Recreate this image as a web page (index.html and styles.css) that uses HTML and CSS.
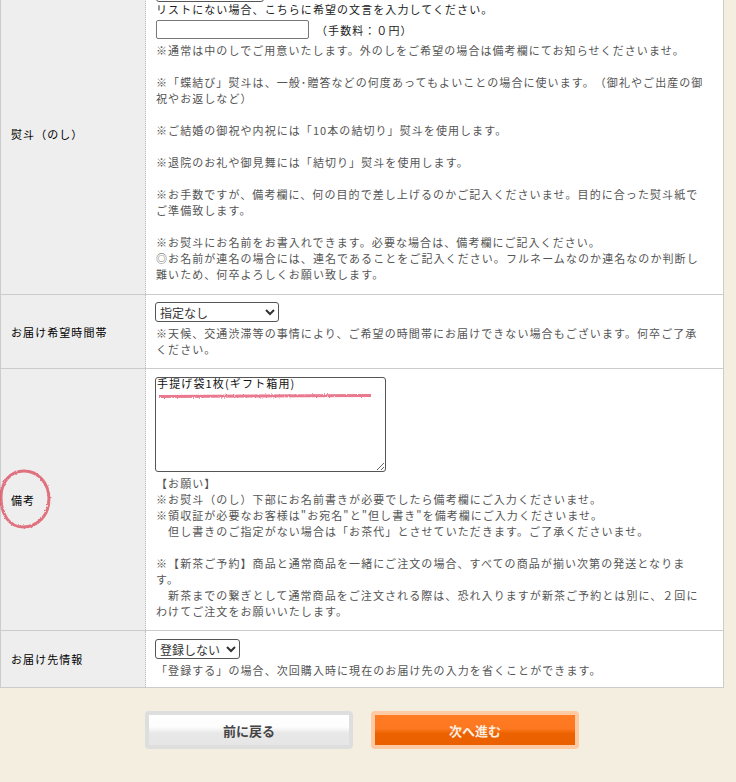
FILE: index.html
```html
<!DOCTYPE html>
<html lang="ja">

<head>
    <meta charset="UTF-8">
    <title>ご注文手続き</title>
    <link rel="stylesheet" href="styles.css">
</head>

<body>
    <div class="page">
        <table class="order">
            <tr class="row-noshi">
                <th>熨斗（のし）</th>
                <td>
                    <select class="sel-noshi">
                        <option>なし</option>
                    </select>
                    <div class="dark">リストにない場合、こちらに希望の文言を入力してください。</div>
                    <div class="fee">
                        <input type="text" class="fee-input">
                        <span class="dark">（手数料：０円）</span>
                    </div>
                    <p>※通常は中のしでご用意いたします。外のしをご希望の場合は備考欄にてお知らせくださいませ。</p>
                    <p>※「蝶結び」熨斗は、一般･贈答などの何度あってもよいことの場合に使います。（御礼やご出産の御<br>祝やお返しなど）</p>
                    <p>※ご結婚の御祝や内祝には「10本の結切り」熨斗を使用します。</p>
                    <p>※退院のお礼や御見舞には「結切り」熨斗を使用します。</p>
                    <p>※お手数ですが、備考欄に、何の目的で差し上げるのかご記入くださいませ。目的に合った熨斗紙で<br>ご準備致します。</p>
                    <p>※お熨斗にお名前をお書入れできます。必要な場合は、備考欄にご記入ください。<br>◎お名前が連名の場合には、連名であることをご記入ください。フルネームなのか連名なのか判断し<br>難いため、何卒よろしくお願い致します。</p>
                </td>
            </tr>
            <tr class="row-time">
                <th>お届け希望時間帯</th>
                <td>
                    <select class="sel-time">
                        <option>指定なし</option>
                    </select>
                    <p class="after-field">※天候、交通渋滞等の事情により、ご希望の時間帯にお届けできない場合もございます。何卒ご了承<br>ください。</p>
                </td>
            </tr>
            <tr class="row-memo">
                <th>備考</th>
                <td>
                    <textarea class="memo">手提げ袋1枚(ギフト箱用)</textarea>
                    <p class="after-memo">【お願い】<br>※お熨斗（のし）下部にお名前書きが必要でしたら備考欄にご入力くださいませ。<br>※領収証が必要なお客様は"お宛名"と"但し書き"を備考欄にご入力くださいませ。<br>　但し書きのご指定がない場合は「お茶代」とさせていただきます。ご了承くださいませ。</p>
                    <p>※【新茶ご予約】商品と通常商品を一緒にご注文の場合、すべての商品が揃い次第の発送となりま<br>す。<br>　新茶までの繋ぎとして通常商品をご注文される際は、恐れ入りますが新茶ご予約とは別に、２回に<br>わけてご注文をお願いいたします。</p>
                </td>
            </tr>
            <tr class="row-save">
                <th>お届け先情報</th>
                <td>
                    <select class="sel-save">
                        <option>登録しない</option>
                    </select>
                    <p class="after-save">「登録する」の場合、次回購入時に現在のお届け先の入力を省くことができます。</p>
                </td>
            </tr>
        </table>
        <div class="actions">
            <button type="button" class="btn btn-back">前に戻る</button>
            <button type="button" class="btn btn-next">次へ進む</button>
        </div>
    </div>

    <!-- red pen marks drawn over the screenshot -->
    <svg class="marks" width="736" height="782" viewBox="0 0 736 782">
        <defs>
            <filter id="rough" filterUnits="userSpaceOnUse" x="0" y="0" width="736" height="782">
                <feTurbulence type="fractalNoise" baseFrequency="0.7" numOctaves="2" seed="4" />
                <feDisplacementMap in="SourceGraphic" scale="2.5" xChannelSelector="R" yChannelSelector="G" />
            </filter>
        </defs>
        <path d="M159 396.5 L371 395.5" class="pen-line" />
        <path d="M24 471 C38 471 49 483 49 499 C49 516 37 527 23 527 C9 527 1 514 1 498 C1 482 10 471 24 471 Z" class="pen-ring" />
    </svg>
</body>

</html>
```

FILE: styles.css
```css
html,
body {
    margin: 0;
    height: 782px;
    overflow: hidden;
}

body {
    background: #f4eee1;
    font-family: "Noto Sans CJK JP", "Liberation Sans", sans-serif;
    font-size: 11px;
    letter-spacing: 1.07px;
    line-height: 16px;
    color: #555;
    position: relative;
    text-spacing-trim: space-all;
}

.page {
    width: 724px;
    margin-top: -28px;
}

.order {
    width: 724px;
    border-collapse: collapse;
    table-layout: fixed;
    background: #fff;
}

.order th,
.order td {
    border: 1px solid #ccc;
    padding: 0;
}

.order th {
    width: 145px;
    background: #eee;
    border-right: 1px dotted #bbb;
    padding-left: 10px;
    box-sizing: border-box;
    text-align: left;
    font-weight: normal;
    color: #000;
}

.order td {
    padding: 0 10px 0 10px;
    border-left: 0;
    vertical-align: top;
}

.row-noshi td {
    padding-top: 9px;
    padding-bottom: 12px;
}

.row-time td {
    padding-top: 7px;
    padding-bottom: 11px;
}

.row-memo td {
    padding-top: 8px;
    padding-bottom: 11px;
}

.row-save td {
    padding-top: 8px;
    padding-bottom: 9px;
}

p {
    margin: 16px 0 0;
}

.dark {
    color: #222;
}

select,
input,
textarea {
    font-family: "Noto Sans CJK JP", "Liberation Sans", sans-serif;
    box-sizing: border-box;
    display: block;
    background: #fff;
    color: #333;
    margin: 0;
}

select {
    height: 20px;
    font-size: 12px;
    letter-spacing: 0;
    padding: 0;
    border: 1px solid #555;
    border-radius: 3px;
}

.sel-noshi {
    width: 108px;
    margin-bottom: -1px;
}

.sel-time {
    width: 124px;
    margin-left: -1px;
}

.sel-save {
    width: 85px;
    margin-left: -1px;
}

.fee {
    display: flex;
    align-items: center;
    gap: 7px;
    margin-top: 3px;
}

.fee-input {
    width: 153px;
    height: 19px;
    border: 1px solid #777;
    border-radius: 2px;
}

.fee + p {
    margin-top: 3px;
}

.after-field {
    margin-top: 3px;
}

.memo {
    width: 231px;
    height: 95px;
    margin-left: -1px;
    padding: 0 0 0 1px;
    border: 1px solid #555;
    border-radius: 3px;
    font-size: 11px;
    line-height: 11px;
    letter-spacing: 1.15px;
    color: #111;
}

.after-memo {
    margin-top: 3px;
}

.after-save {
    margin-top: 3px;
}

.actions {
    display: flex;
    gap: 18px;
    padding: 23px 0 0 145px;
}

.btn {
    width: 208px;
    height: 38px;
    border-radius: 4px;
    font-family: "Noto Sans CJK JP", "Liberation Sans", sans-serif;
    font-size: 13px;
    font-weight: bold;
    letter-spacing: 0;
    cursor: pointer;
    background-clip: padding-box;
}

.btn-back {
    color: #444;
    border: 4px solid #dedede;
    background-image: linear-gradient(#fff 0%, #fdfdfd 40%, #e8e8e8 60%, #e6e6e6 100%);
}

.btn-next {
    color: #fbeee0;
    border: 4px solid #fdcaa3;
    background-image: linear-gradient(#ff7b22 0%, #fd7820 45%, #ec6200 62%, #ea6000 100%);
}

.marks {
    position: absolute;
    left: 0;
    top: 0;
    pointer-events: none;
}

.pen-line {
    fill: none;
    stroke: #e2405f;
    stroke-width: 3;
    opacity: 0.7;
    filter: url(#rough);
}

.pen-ring {
    fill: none;
    stroke: #dc4a5c;
    stroke-width: 3;
    opacity: 0.75;
    filter: url(#rough);
}
```
